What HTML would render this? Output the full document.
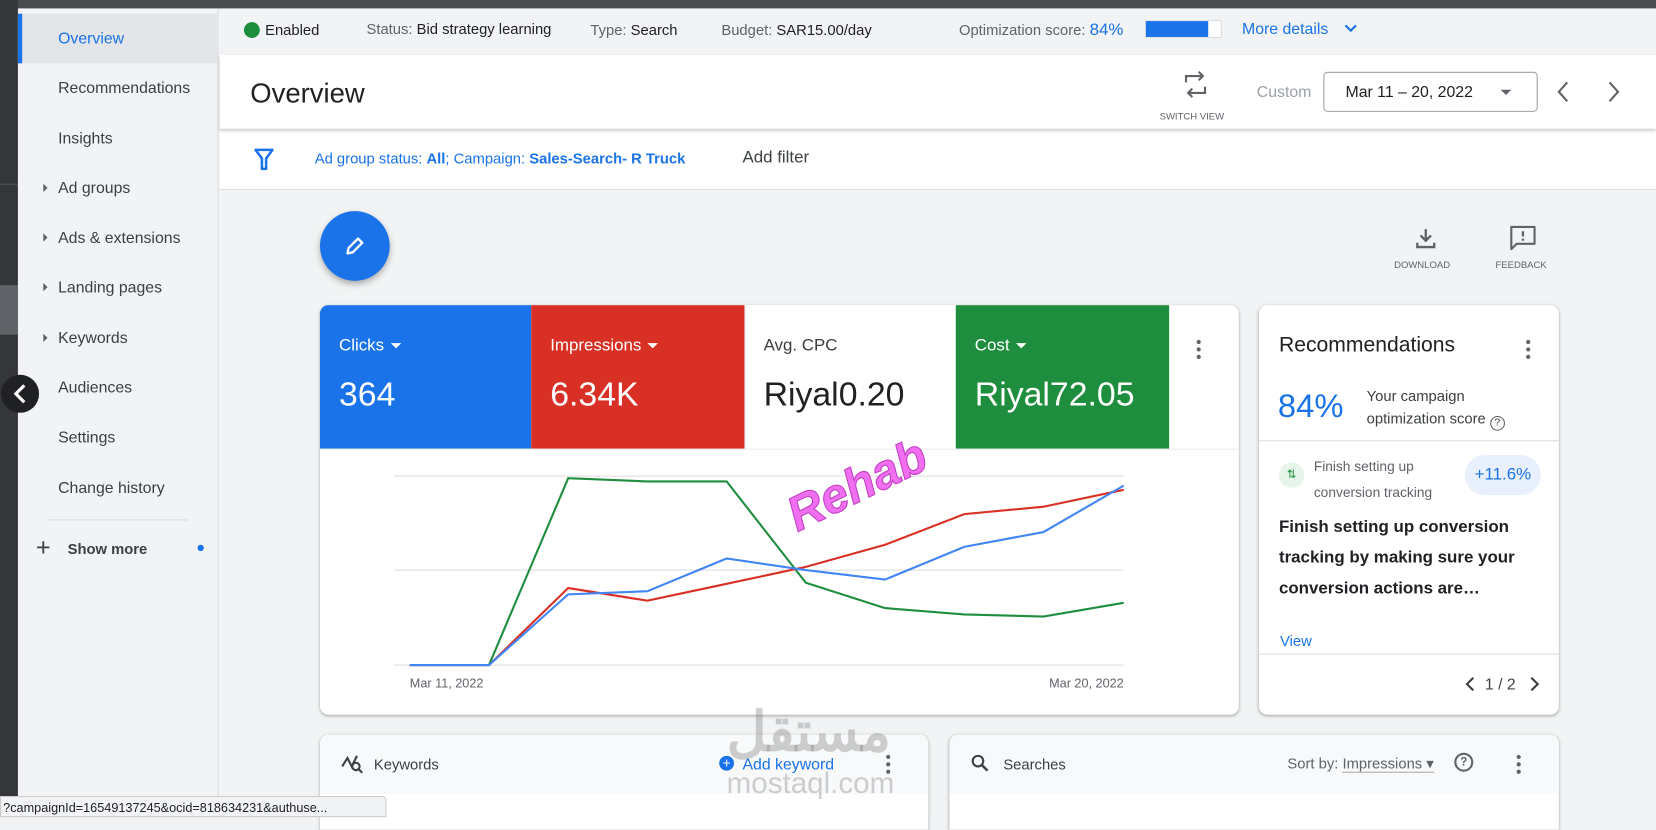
<!DOCTYPE html>
<html><head><meta charset="utf-8"><style>
*{box-sizing:border-box;margin:0;padding:0}
html,body{width:1656px;height:815px;overflow:hidden;background:#f1f3f4;font-family:"Liberation Sans",Arial,sans-serif;color:#3c4043}
#s{position:absolute;left:0;top:0;width:1568px;height:772px;transform:scale(1.05612,1.0557);transform-origin:0 0;background:#f1f3f4}
.a{position:absolute}
.nav{position:absolute;left:55px;font-size:15px;color:#3c4043}
.tri{position:absolute;left:41px;width:0;height:0;border-left:4px solid #5f6368;border-top:4px solid transparent;border-bottom:4px solid transparent}
.card{position:absolute;background:#fff;border-radius:8px;box-shadow:0 1px 3px rgba(60,64,67,.3),0 1px 2px rgba(60,64,67,.15);overflow:hidden}
.tile{position:absolute;top:0;height:136px;color:#fff}
.tile .l{position:absolute;left:18px;top:30px;font-size:16px}
.tile .v{position:absolute;left:18px;top:66px;font-size:32px}
.dd{display:inline-block;width:0;height:0;border-top:5px solid currentColor;border-left:5px solid transparent;border-right:5px solid transparent;vertical-align:middle;margin-left:6px}
.keb{position:absolute;width:4px}
.keb i{display:block;width:4px;height:4px;border-radius:2px;background:#5f6368;margin-bottom:3px}
</style></head><body><div id="s">
<!-- dark frame -->
<div class="a" style="left:0;top:0;width:1568px;height:8px;background:#4a4b4f"></div>
<div class="a" style="left:0;top:0;width:17px;height:772px;background:#35363a"></div>
<div class="a" style="left:0;top:270px;width:17px;height:47px;background:#5f6368"></div>
<div class="a" style="left:0;top:174px;width:17px;height:1px;background:#555"></div>
<!-- sidebar -->
<div class="a" style="left:17px;top:8px;width:190px;height:764px;background:#f1f3f4;border-right:1px solid #dadce0"></div>
<div class="a" style="left:17px;top:13px;width:190px;height:47px;background:#e3e5e8"></div>
<div class="a" style="left:17px;top:13px;width:4px;height:47px;background:#1a73e8"></div>
<div class="a" style="left:1px;top:355px;width:36px;height:36px;border-radius:18px;background:#202124;z-index:3"></div>
<svg class="a" style="left:11px;top:363px;z-index:4" width="16" height="20"><path d="M12 2 L4 10 L12 18" stroke="#fff" stroke-width="3" fill="none"/></svg>
<div class="nav" style="top:28px;color:#1a73e8">Overview</div>
<div class="nav" style="top:75px">Recommendations</div>
<div class="nav" style="top:123px">Insights</div>
<div class="tri" style="top:174px"></div><div class="nav" style="top:170px">Ad groups</div>
<div class="tri" style="top:221px"></div><div class="nav" style="top:217px">Ads &amp; extensions</div>
<div class="tri" style="top:268px"></div><div class="nav" style="top:264px">Landing pages</div>
<div class="tri" style="top:316px"></div><div class="nav" style="top:312px">Keywords</div>
<div class="nav" style="top:359px">Audiences</div>
<div class="nav" style="top:406px">Settings</div>
<div class="nav" style="top:454px">Change history</div>
<div class="a" style="left:45px;top:492px;width:133px;height:1px;background:#dadce0"></div>
<div class="a" style="left:34px;top:505px;font-size:24px;color:#3c4043">+</div>
<div class="a" style="left:64px;top:512px;font-size:14px;font-weight:bold;color:#3c4043">Show more</div>
<div class="a" style="left:187px;top:516px;width:6px;height:6px;border-radius:3px;background:#1a73e8"></div>
<!-- status bar -->
<div class="a" style="left:208px;top:8px;width:1360px;height:44px;background:#f1f3f4;font-size:14px;color:#5f6368">
<div class="a" style="left:23px;top:13px;width:15px;height:15px;border-radius:8px;background:#1e8e3e"></div>
<div class="a" style="left:43px;top:12px;color:#202124">Enabled</div>
<div class="a" style="left:139px;top:11px">Status: <span style="color:#202124">Bid strategy learning</span></div>
<div class="a" style="left:351px;top:12px">Type: <span style="color:#202124">Search</span></div>
<div class="a" style="left:475px;top:12px">Budget: <span style="color:#202124">SAR15.00/day</span></div>
<div class="a" style="left:700px;top:12px">Optimization score: <span style="color:#1a73e8;font-size:16px">84%</span></div>
<div class="a" style="left:876px;top:11px;width:73px;height:17px;background:#fff;border:1px solid #dadce0"><div style="width:59px;height:15px;background:#1a73e8"></div></div>
<div class="a" style="left:968px;top:11px;color:#1a73e8;font-size:15px">More details</div>
<svg class="a" style="left:1064px;top:14px" width="14" height="10"><path d="M2 2 L7 7 L12 2" stroke="#1a73e8" stroke-width="2" fill="none"/></svg>
</div>
<!-- header -->
<div class="a" style="left:208px;top:52px;width:1360px;height:70px;background:#fff;box-shadow:0 2px 3px rgba(0,0,0,.2);z-index:2">
<div class="a" style="left:29px;top:21px;font-size:26px;color:#202124">Overview</div>
<svg class="a" style="left:912px;top:15px" width="24" height="26"><path d="M3 11 V5 H19 M15 1 L19 5 L15 9 M21 15 V21 H5 M9 17 L5 21 L9 25" stroke="#5f6368" stroke-width="2" fill="none"/></svg>
<div class="a" style="left:890px;top:53px;font-size:9px;color:#5f6368">SWITCH VIEW</div>
<div class="a" style="left:982px;top:27px;font-size:15px;color:#9aa0a6">Custom</div>
<div class="a" style="left:1045px;top:16px;width:203px;height:38px;border:1px solid #9aa0a6;border-radius:4px"><div class="a" style="left:20px;top:10px;font-size:15px;color:#202124">Mar 11 – 20, 2022</div><div class="a" style="left:167px;top:16px;border-top:5px solid #5f6368;border-left:5px solid transparent;border-right:5px solid transparent"></div></div>
<svg class="a" style="left:1265px;top:24px" width="14" height="22"><path d="M11 2 L3 11 L11 20" stroke="#5f6368" stroke-width="2" fill="none"/></svg>
<svg class="a" style="left:1313px;top:24px" width="14" height="22"><path d="M3 2 L11 11 L3 20" stroke="#5f6368" stroke-width="2" fill="none"/></svg>
</div>
<!-- filter -->
<div class="a" style="left:208px;top:122px;width:1360px;height:58px;background:#fff;border-bottom:1px solid #dadce0">
<svg class="a" style="left:32px;top:18px" width="20" height="22"><path d="M2 2 H18 L12 10 V20 H8 V10 Z" stroke="#1a73e8" stroke-width="2.4" fill="none" stroke-linejoin="round"/></svg>
<div class="a" style="left:90px;top:20px;font-size:14px;color:#1a73e8">Ad group status: <b>All</b>; Campaign: <b>Sales-Search- R Truck</b></div>
<div class="a" style="left:495px;top:19px;font-size:16px;color:#3c4043">Add filter</div>
</div>
<!-- FAB -->
<div class="a" style="left:303px;top:200px;width:66px;height:66px;border-radius:33px;background:#1a73e8;box-shadow:0 3px 6px rgba(0,0,0,.3)"></div>
<svg class="a" style="left:325px;top:222px" width="22" height="22"><path d="M4 18 L5 13 L14 4 L18 8 L9 17 Z" stroke="#fff" stroke-width="2.2" fill="none" stroke-linejoin="round"/></svg>
<svg class="a" style="left:1339px;top:215px" width="22" height="22"><path d="M11 2 V13 M6 8 L11 13 L16 8 M3 15 V19 H19 V15" stroke="#5f6368" stroke-width="2.2" fill="none"/></svg>
<div class="a" style="left:1320px;top:246px;font-size:9px;color:#5f6368">DOWNLOAD</div>
<svg class="a" style="left:1429px;top:213px" width="26" height="24"><path d="M2 2 H24 V18 H7 L2 23 Z" stroke="#5f6368" stroke-width="2" fill="none" stroke-linejoin="round"/><path d="M13 6 V11 M13 13 V15" stroke="#5f6368" stroke-width="2.2"/></svg>
<div class="a" style="left:1416px;top:246px;font-size:9px;color:#5f6368">FEEDBACK</div>
<!-- chart card -->
<div class="card" style="left:303px;top:289px;width:870px;height:388px">
<div class="tile" style="left:0;width:200px;background:#1a73e8"><div class="l">Clicks<span class="dd"></span></div><div class="v">364</div></div>
<div class="tile" style="left:200px;width:202px;background:#d93025"><div class="l">Impressions<span class="dd"></span></div><div class="v">6.34K</div></div>
<div class="tile" style="left:402px;width:200px;background:#fff;color:#202124"><div class="l" style="color:#3c4043">Avg. CPC</div><div class="v">Riyal0.20</div></div>
<div class="tile" style="left:602px;width:202px;background:#1e8e3e"><div class="l">Cost<span class="dd"></span></div><div class="v">Riyal72.05</div></div>
<div class="keb" style="left:830px;top:33px"><i></i><i></i><i></i></div>
<div class="a" style="left:0;top:136px;width:870px;height:1px;background:#e8eaed"></div>
<svg class="a" style="left:0;top:0" width="870" height="388">
<g stroke="#e3e3e3" stroke-width="1.2"><line x1="70" y1="162" x2="761" y2="162"/><line x1="70" y1="251" x2="761" y2="251"/><line x1="70" y1="341" x2="761" y2="341"/></g>
<g fill="none" stroke-width="2">
<polyline stroke="#1e8e3e" points="85,341 160,341 235,164 310,167 385,167 460,263 535,287 610,293 685,295 761,282"/>
<polyline stroke="#d93025" points="85,341 160,341 235,268 310,280 385,264 460,248 535,227 610,198 685,191 761,175"/>
<polyline stroke="#4285f4" points="85,341 160,341 235,274 310,271 385,240 460,251 535,260 610,229 685,215 761,171"/>
</g>
<text x="85" y="362" font-size="12" fill="#5f6368" font-family="Liberation Sans">Mar 11, 2022</text>
<text x="761" y="362" font-size="12" fill="#5f6368" text-anchor="end" font-family="Liberation Sans">Mar 20, 2022</text>
<text x="0" y="0" font-size="46" font-weight="bold" font-style="italic" fill="#f06ef0" stroke="#c040c0" stroke-width="1" transform="translate(452,215) rotate(-26)" font-family="Liberation Sans">Rehab</text>
</svg>
</div>
<!-- rec card -->
<div class="card" style="left:1192px;top:289px;width:284px;height:388px">
<div class="a" style="left:19px;top:27px;font-size:20px;color:#202124">Recommendations</div>
<div class="keb" style="left:253px;top:33px"><i></i><i></i><i></i></div>
<div class="a" style="left:18px;top:78px;font-size:31px;color:#1a73e8">84%</div>
<div class="a" style="left:102px;top:76px;font-size:14px;line-height:21px;color:#3c4043">Your campaign<br>optimization score <span style="display:inline-block;width:14px;height:14px;border:1.5px solid #5f6368;border-radius:7px;font-size:10px;line-height:11px;text-align:center;vertical-align:-2px">?</span></div>
<div class="a" style="left:0;top:128px;width:284px;height:1px;background:#dadce0"></div>
<div class="a" style="left:19px;top:149px;width:24px;height:24px;border-radius:12px;background:#e6f4ea;color:#1e8e3e;font-size:11px;text-align:center;line-height:24px">⇅</div>
<div class="a" style="left:52px;top:140px;font-size:13px;line-height:25px;color:#5f6368">Finish setting up<br>conversion tracking</div>
<div class="a" style="left:195px;top:142px;width:72px;height:38px;border-radius:19px;background:#e8f0fe;color:#1a73e8;font-size:16px;text-align:center;line-height:38px">+11.6%</div>
<div class="a" style="left:19px;top:196px;font-size:16px;font-weight:bold;line-height:29px;color:#202124">Finish setting up conversion<br>tracking by making sure your<br>conversion actions are…</div>
<div class="a" style="left:20px;top:310px;font-size:14px;color:#1a73e8">View</div>
<div class="a" style="left:0;top:330px;width:284px;height:1px;background:#dadce0"></div>
<svg class="a" style="left:195px;top:352px" width="10" height="14"><path d="M8 1 L2 7 L8 13" stroke="#3c4043" stroke-width="2" fill="none"/></svg>
<div class="a" style="left:214px;top:351px;font-size:15px;color:#3c4043">1 / 2</div>
<svg class="a" style="left:256px;top:352px" width="10" height="14"><path d="M2 1 L8 7 L2 13" stroke="#3c4043" stroke-width="2" fill="none"/></svg>
</div>
<!-- bottom cards -->
<div class="card" style="left:303px;top:696px;width:576px;height:90px;border-radius:8px 8px 0 0">
<div class="a" style="left:0;top:0;width:576px;height:56px;background:#f8f9fa"></div>
<svg class="a" style="left:20px;top:18px" width="22" height="20"><path d="M1 12 L6 4 L10 12 L15 2" stroke="#3c4043" stroke-width="2" fill="none"/><circle cx="14" cy="12" r="3.5" stroke="#3c4043" stroke-width="2" fill="none"/><path d="M16.5 14.5 L20 18" stroke="#3c4043" stroke-width="2"/></svg>
<div class="a" style="left:51px;top:20px;font-size:14px;color:#3c4043">Keywords</div>
<div class="a" style="left:378px;top:20px;width:14px;height:14px;border-radius:7px;background:#1a73e8;color:#fff;font-size:13px;line-height:14px;text-align:center">+</div>
<div class="a" style="left:400px;top:20px;font-size:15px;color:#1a73e8">Add keyword</div>
<div class="keb" style="left:536px;top:19px"><i></i><i></i><i></i></div>
</div>
<div class="card" style="left:899px;top:696px;width:577px;height:90px;border-radius:8px 8px 0 0">
<div class="a" style="left:0;top:0;width:577px;height:56px;background:#f8f9fa"></div>
<svg class="a" style="left:20px;top:18px" width="18" height="18"><circle cx="7" cy="7" r="5" stroke="#3c4043" stroke-width="2" fill="none"/><path d="M11 11 L16 16" stroke="#3c4043" stroke-width="2.4"/></svg>
<div class="a" style="left:51px;top:20px;font-size:14px;color:#3c4043">Searches</div>
<div class="a" style="left:320px;top:19px;font-size:14px;color:#5f6368">Sort by: <span style="border-bottom:1px solid #aaa">Impressions ▾</span></div>
<div class="a" style="left:478px;top:17px;width:18px;height:18px;border:2px solid #5f6368;border-radius:9px;font-size:11px;line-height:14px;text-align:center;color:#5f6368;font-weight:bold">?</div>
<div class="keb" style="left:537px;top:19px"><i></i><i></i><i></i></div>
</div>
<!-- watermark -->
<div class="a" style="left:688px;top:664px;font-size:52px;font-weight:bold;color:rgba(120,120,120,.35);font-family:'Liberation Sans','Noto Sans CJK SC',sans-serif">مستقل</div>
<div class="a" style="left:688px;top:726px;font-size:28px;color:rgba(120,120,120,.35)">mostaql.com</div>
<!-- url tooltip -->
<div class="a" style="left:0;top:754px;width:366px;height:20px;background:#f1f3f4;border:1px solid #ccc;border-radius:0 4px 0 0;font-size:12px;color:#202124;padding:3px 0 0 2px;white-space:nowrap;overflow:hidden">?campaignId=16549137245&amp;ocid=818634231&amp;authuse...</div>
</div></body></html>
